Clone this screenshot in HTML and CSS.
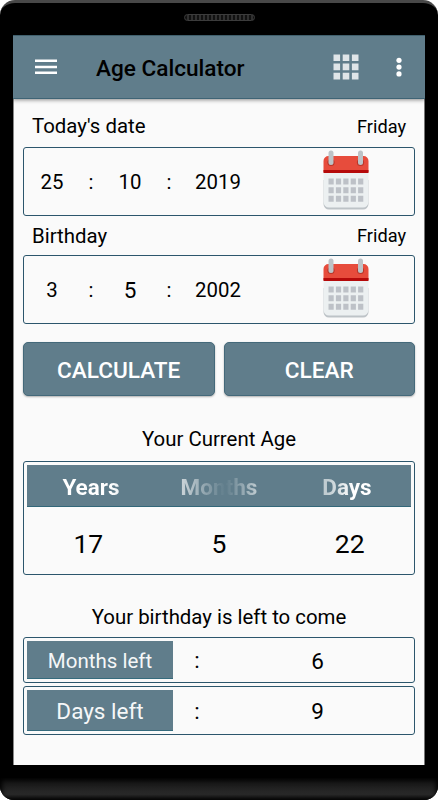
FILE: index.html
```html
<!DOCTYPE html>
<html lang="en">
<head>
    <meta charset="UTF-8">
    <title>Age Calculator</title>
    <link rel="stylesheet" href="styles.css">
</head>
<body>
    <svg class="defs" width="0" height="0">
        <symbol id="calendar" viewBox="0 0 46 60">
            <path d="M0.5 30h45v24a5.5 5.5 0 0 1-5.5 5.5H6a5.5 5.5 0 0 1-5.5-5.5z" fill="#bdc3c7"/>
            <path d="M0.5 20h45v32a5.5 5.5 0 0 1-5.5 5.5H6a5.5 5.5 0 0 1-5.5-5.5z" fill="#ecf0f1"/>
            <path d="M0.5 22v-11a5 5 0 0 1 5-5h35a5 5 0 0 1 5 5v11z" fill="#e74c3c"/>
            <path d="M0.5 20h45v3h-45z" fill="#b50a0a"/>
            <circle cx="8" cy="12.5" r="3.6" fill="#b8372a"/>
            <circle cx="37.5" cy="12.5" r="3.6" fill="#b8372a"/>
            <rect x="5.5" y="0.5" width="5" height="14.5" rx="2.5" fill="#bdc3c7"/>
            <rect x="35" y="0.5" width="5" height="14.5" rx="2.5" fill="#bdc3c7"/>
            <path d="M5.5 31.6h35M5.5 40.2h35M5.5 48.8h35" stroke="#bdc1c7" stroke-width="6" stroke-dasharray="5.2 2.2"/>
        </symbol>
    </svg>

    <div class="phone">
        <div class="speaker"></div>
        <div class="screen">
            <header class="toolbar">
                <svg class="menu" width="22" height="16" viewBox="0 0 22 16">
                    <path d="M0 1.7h22M0 8h22M0 13.8h22" stroke="#fff" stroke-width="2.4"/>
                </svg>
                <h1>Age Calculator</h1>
                <svg class="apps" width="26" height="26" viewBox="0 0 26 26">
                    <path d="M0.5 3.7h25M0.5 12.9h25M0.5 22.1h25" stroke="#dfe5e8" stroke-width="6.6" stroke-dasharray="6.6 2.6"/>
                </svg>
                <svg class="more" width="6" height="20" viewBox="0 0 6 20">
                    <circle cx="3" cy="3.3" r="2.6" fill="#fff"/>
                    <circle cx="3" cy="10.1" r="2.6" fill="#fff"/>
                    <circle cx="3" cy="16.9" r="2.6" fill="#fff"/>
                </svg>
            </header>

            <main class="content">
                <div class="label first"><span>Today's date</span><span class="weekday">Friday</span></div>
                <div class="box date">
                    <span>25</span><span>:</span><span>10</span><span>:</span><span>2019</span>
                    <svg class="calendar"><use href="#calendar"/></svg>
                </div>

                <div class="label"><span>Birthday</span><span class="weekday">Friday</span></div>
                <div class="box date">
                    <span>3</span><span>:</span><span class="picked">5</span><span>:</span><span>2002</span>
                    <svg class="calendar"><use href="#calendar"/></svg>
                </div>

                <div class="buttons">
                    <button type="button">CALCULATE</button>
                    <button type="button">CLEAR</button>
                </div>

                <h2>Your Current Age</h2>
                <div class="box age">
                    <div class="age-head">
                        <span class="years">Years</span><span class="months">Months</span><span class="days">Days</span>
                    </div>
                    <div class="age-values">
                        <span>17</span><span>5</span><span>22</span>
                    </div>
                </div>

                <h2 class="next">Your birthday is left to come</h2>
                <div class="box left months-left">
                    <span class="tag">Months left</span><span>:</span><span class="value">6</span>
                </div>
                <div class="box left days-left">
                    <span class="tag">Days left</span><span>:</span><span class="value">9</span>
                </div>
            </main>
        </div>
        <div class="chin"></div>
    </div>
</body>
</html>
```

FILE: styles.css
```css
* {
    box-sizing: border-box;
}
body {
    margin: 0;
    background-color: #fff;
    font-family: Roboto, sans-serif;
    font-size: 20.4px;
    color: #000;
}
.defs {
    position: absolute;
}
.phone {
    width: 438px;
    height: 800px;
    display: flex;
    flex-direction: column;
    align-items: center;
    background-color: #000;
    border-top: 3px solid #484848;
    border-radius: 15px 15px 14px 14px;
    overflow: hidden;
}
.speaker {
    width: 71px;
    height: 7px;
    margin: 11px 0 14px;
    border: 1px solid #3c3c3c;
    border-radius: 4px;
    background: repeating-linear-gradient(90deg, #111 0 2px, #303030 2px 4px);
}
.screen {
    width: 412px;
    height: 730px;
    background-color: #fafafa;
    border-left: 1px solid #888;
    border-right: 1px solid #777;
}
.chin {
    width: 100%;
    height: 22px;
    margin-top: 13px;
    background: linear-gradient(#101010, #2b2b2b 75%, #181818);
    box-shadow: inset 0 0 5px 2px #000;
}

/* toolbar */
.toolbar {
    height: 64px;
    margin: 0 -1px;
    padding: 0 23px 0 22px;
    display: flex;
    align-items: center;
    background-color: #607d8b;
    border-top: 1px solid #40606d;
    border-bottom: 1px solid #3f6475;
    box-shadow: 0 1px 4px rgba(0,0,0,0.45);
}
.toolbar h1 {
    margin: 2px 0 0 39px;
    font-size: 22.6px;
    font-weight: 500;
    flex: 1;
}
.apps {
    margin-right: 37px;
}

/* date fields */
.content {
    padding: 0 9px;
}
.label {
    height: 39px;
    padding: 0 9px;
    display: flex;
    justify-content: space-between;
    align-items: center;
}
.label.first {
    height: 48px;
    padding-top: 6px;
}
.weekday {
    font-size: 18.2px;
}
.box {
    border: 1px solid #2c566c;
    border-radius: 3px;
}
.date {
    height: 69px;
    padding-top: 1px;
    display: grid;
    grid-template-columns: 56px 22px 56px 22px 76px 1fr;
    align-items: center;
    text-align: center;
}
.picked {
    font-size: 22.5px;
}
.calendar {
    width: 46px;
    height: 60px;
    margin-left: 67px;
    margin-bottom: 5px;
}

/* buttons */
.buttons {
    margin-top: 18px;
    display: grid;
    grid-template-columns: 1fr 1fr;
    gap: 9px;
}
button {
    height: 54px;
    padding: 2px 0 0;
    border: 1px solid #44697a;
    border-radius: 5px;
    background-color: #607d8b;
    box-shadow: 0 1px 2px rgba(0,0,0,0.3);
    color: #fff;
    font-family: inherit;
    font-size: 22.6px;
    font-weight: 500;
}

/* results */
h2 {
    height: 65px;
    margin: 0;
    padding-top: 31px;
    font-size: 20.4px;
    font-weight: 400;
    text-align: center;
}
h2.next {
    height: 62px;
    padding-top: 30px;
}
.age {
    height: 114px;
    padding: 3px;
}
.age-head, .age-values {
    display: grid;
    grid-template-columns: repeat(3, 1fr);
    align-items: center;
    text-align: center;
}
.age-head {
    height: 42px;
    padding-top: 2px;
    background-color: #607d8b;
    border-bottom: 1px solid #326779;
    font-size: 22.5px;
    font-weight: 700;
}
.age-head span {
    color: transparent;
    background-clip: text;
}
.years {
    background-image: linear-gradient(90deg, #fff 65%, #bdcbd1 90%);
}
.months {
    background-image: linear-gradient(90deg, #c6d0d5 22%, #607d8b 55%, #c0ccd1 80%);
}
.days {
    background-image: linear-gradient(90deg, #c0ccd1 35%, #fff 55%);
}
.age-values {
    height: 72px;
    margin: 0 -4px;
    font-size: 26.5px;
}
.left {
    padding: 3px;
    display: grid;
    grid-template-columns: 146px 48px 1fr;
    text-align: center;
    align-items: center;
    font-size: 22.5px;
}
.months-left {
    height: 46px;
}
.days-left {
    height: 49px;
    margin-top: 3px;
}
.tag {
    height: 100%;
    padding-top: 2px;
    display: flex;
    justify-content: center;
    align-items: center;
    background-color: #607d8b;
    border-bottom: 1px solid #356b7d;
    color: #f5f7f8;
    font-size: 20.5px;
}
.days-left .tag {
    font-size: 22.5px;
}
.value {
    padding: 1px 0 0 3px;
}
```
